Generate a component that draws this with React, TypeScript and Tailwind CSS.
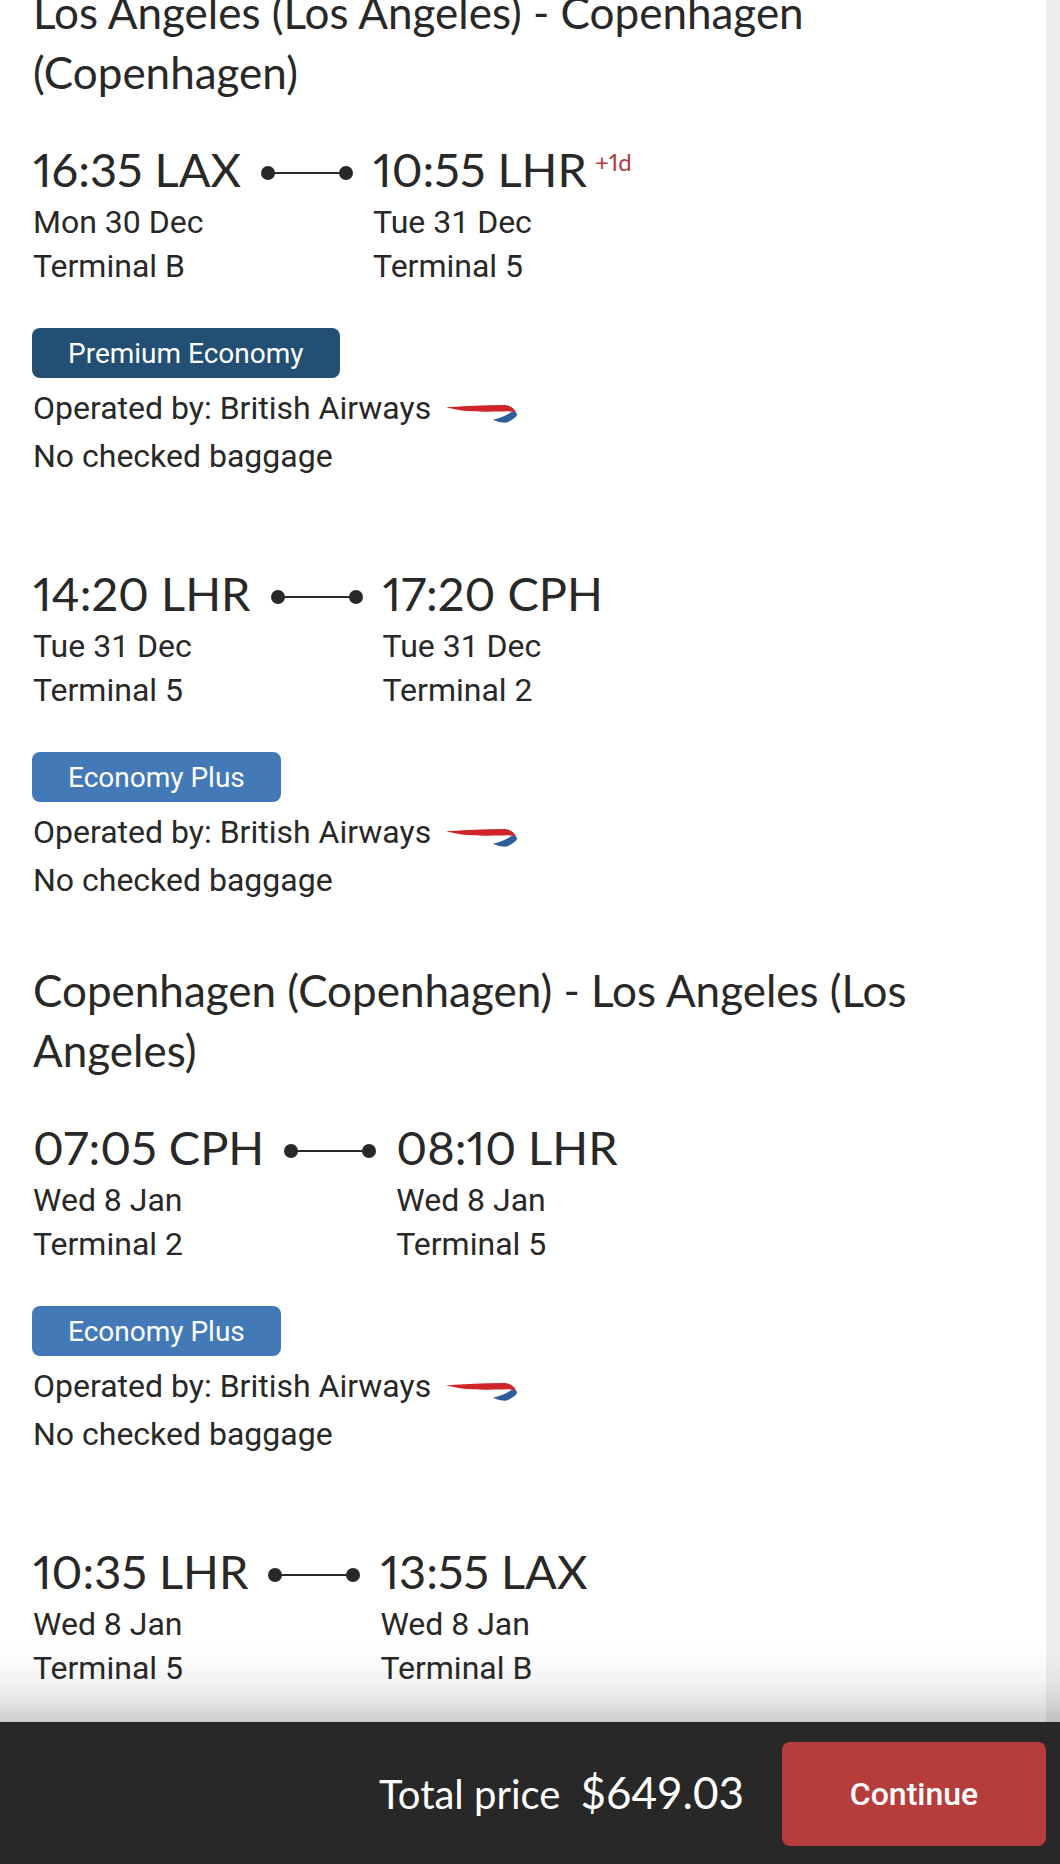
import React from 'react';

type Stop = { time: string; airport: string; date: string; terminal: string; extra?: string };
type Flight = { from: Stop; to: Stop; cabin?: string };
type Journey = { title: string; flights: Flight[] };

const journeys: Journey[] = [
  {
    title: 'Los Angeles (Los Angeles) - Copenhagen (Copenhagen)',
    flights: [
      {
        from: { time: '16:35', airport: 'LAX', date: 'Mon 30 Dec', terminal: 'Terminal B' },
        to: { time: '10:55', airport: 'LHR', date: 'Tue 31 Dec', terminal: 'Terminal 5', extra: '+1d' },
        cabin: 'Premium Economy',
      },
      {
        from: { time: '14:20', airport: 'LHR', date: 'Tue 31 Dec', terminal: 'Terminal 5' },
        to: { time: '17:20', airport: 'CPH', date: 'Tue 31 Dec', terminal: 'Terminal 2' },
        cabin: 'Economy Plus',
      },
    ],
  },
  {
    title: 'Copenhagen (Copenhagen) - Los Angeles (Los Angeles)',
    flights: [
      {
        from: { time: '07:05', airport: 'CPH', date: 'Wed 8 Jan', terminal: 'Terminal 2' },
        to: { time: '08:10', airport: 'LHR', date: 'Wed 8 Jan', terminal: 'Terminal 5' },
        cabin: 'Economy Plus',
      },
      {
        from: { time: '10:35', airport: 'LHR', date: 'Wed 8 Jan', terminal: 'Terminal 5' },
        to: { time: '13:55', airport: 'LAX', date: 'Wed 8 Jan', terminal: 'Terminal B' },
      },
    ],
  },
];

function Ribbon() {
  return (
    <svg className="mt-3" width="71" height="18" viewBox="0 0 71 18" aria-hidden="true">
      <path d="M0 2.3C18 1 38 0 57 0C64 0 68.5 3 70.5 8.8C68 6.9 65.5 6.2 61 6.3C45 6.9 22 6.8 14 5.2C9 4.2 4 3.2 0 2.3Z" fill="#cf2428" />
      <path d="M66 6.6C69.5 7 71 8 71 10C70.5 12 65 16 60 17.8C55 17.8 51 16.8 47 14.8C54 13 60 11 66 6.6Z" fill="#2f5d9b" />
    </svg>
  );
}

function Connector() {
  return (
    <svg className="mt-7 shrink-0" width="92" height="14" viewBox="0 0 92 14" fill="#282828" aria-hidden="true">
      <circle cx="7" cy="7" r="7" />
      <rect x="7" y="6" width="78" height="2" />
      <circle cx="85" cy="7" r="7" />
    </svg>
  );
}

function StopInfo({ stop }: { stop: Stop }) {
  return (
    <div>
      <p className="flex gap-2 font-[Lato,sans-serif] text-[47px] leading-[62px] proportional-nums">
        <span>{stop.time} {stop.airport}</span>
        {stop.extra ? <span className="text-2xl leading-[48px] text-[#b43b3b]">{stop.extra}</span> : null}
      </p>
      <p>{stop.date}</p>
      <p>{stop.terminal}</p>
    </div>
  );
}

function FlightCard({ flight }: { flight: Flight }) {
  const badge = flight.cabin === 'Premium Economy' ? 'bg-[#224f73]' : 'bg-[#4379b7]';
  return (
    <li>
      <div className="flex gap-5 leading-[44px]">
        <StopInfo stop={flight.from} />
        <Connector />
        <StopInfo stop={flight.to} />
      </div>
      {flight.cabin ? (
        <>
          <div className={`mt-10 mb-1.5 -ml-px w-fit rounded-lg px-9 pt-0.5 text-[28px] leading-[48px] text-white ${badge}`}>{flight.cabin}</div>
          <p className="flex items-center gap-[15px] leading-[48px]">
            Operated by: British Airways
            <Ribbon />
          </p>
          <p className="leading-[48px]">No checked baggage</p>
        </>
      ) : null}
    </li>
  );
}

export default function App() {
  return (
    <div className="flex min-h-screen flex-col bg-[#eee] font-[Roboto,sans-serif] text-[32px] text-[#282828]">
      <main className="mr-[14px] flex-1 overflow-hidden bg-white px-[33px]">
        <div className="-mt-[18px] flex flex-col gap-14">
          {journeys.map((journey) => (
            <section key={journey.title}>
              <h2 className="mb-9 font-[Lato,sans-serif] text-[44px] leading-[60px]">{journey.title}</h2>
              <ul className="flex flex-col gap-[82px]">
                {journey.flights.map((flight) => (
                  <FlightCard key={flight.from.time} flight={flight} />
                ))}
              </ul>
            </section>
          ))}
        </div>
      </main>

      <footer className="sticky bottom-0 flex items-center justify-end bg-[#282828] pt-5 pr-[14px] pb-[18px] text-white">
        <div className="pointer-events-none absolute inset-x-0 bottom-full h-20 bg-[linear-gradient(to_top,#0003,#0000001b_25%,#0000000e_45%,#00000004_75%,#0000)]" />
        <p className="mr-[38px] flex items-baseline gap-5 pb-1 font-[Lato,sans-serif]">
          <span className="text-[40px]">Total price</span>
          <span className="text-[44px]">$649.03</span>
        </p>
        <button type="button" className="h-[104px] w-[264px] rounded-lg bg-[#b73c3c] font-medium">Continue</button>
      </footer>
    </div>
  );
}
